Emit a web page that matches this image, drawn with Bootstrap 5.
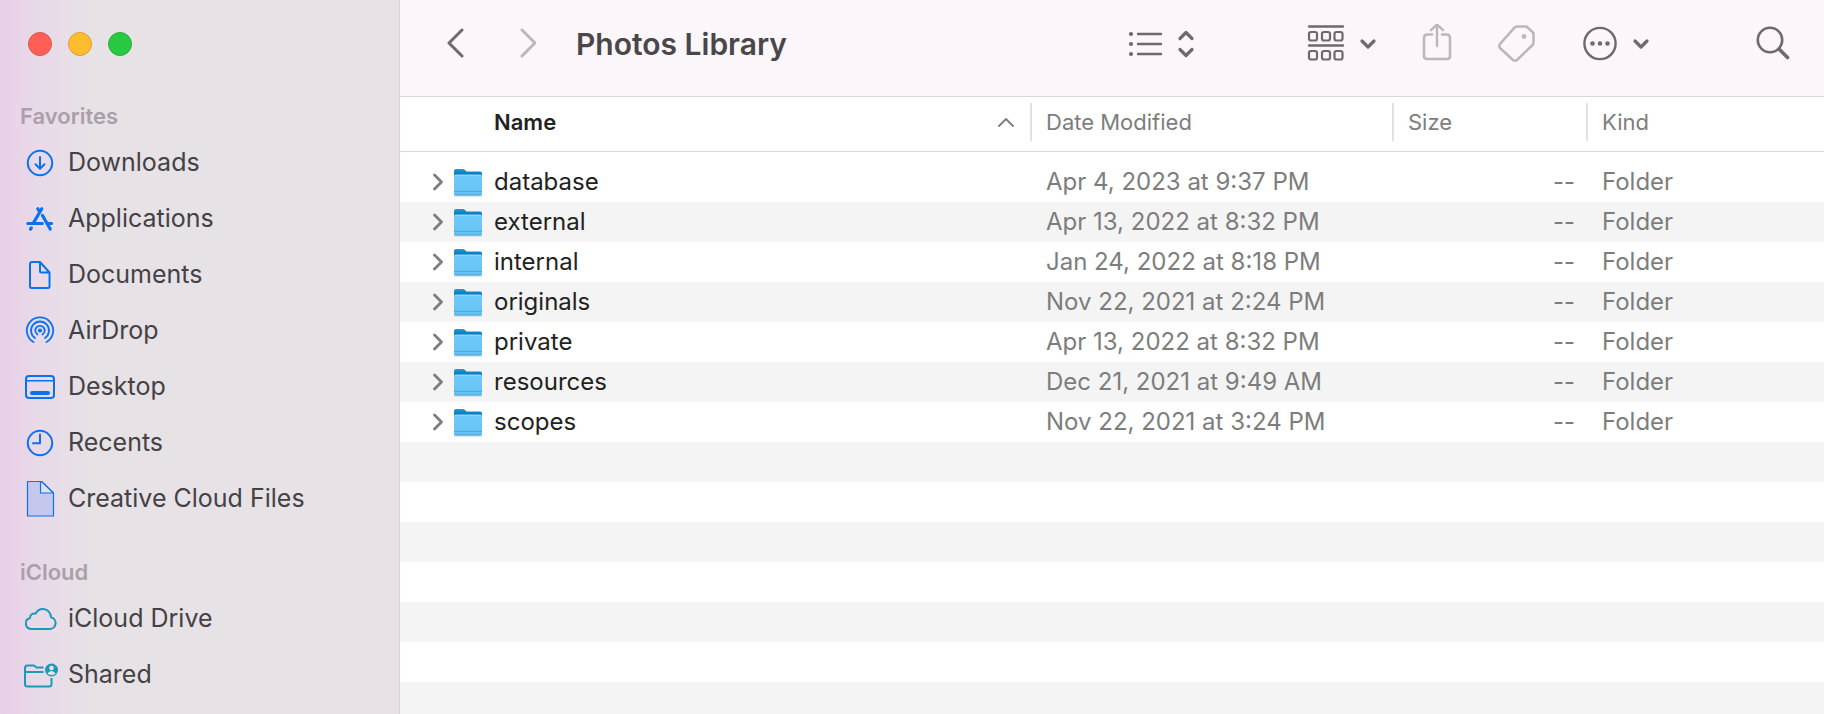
<!DOCTYPE html>
<html lang="en">
<head>
<meta charset="utf-8">
<meta name="viewport" content="width=device-width, initial-scale=1">
<title>Photos Library</title>
<link href="https://cdn.jsdelivr.net/npm/bootstrap@5.3.0/dist/css/bootstrap.min.css" rel="stylesheet">
<style>
  body { font-family: Inter, "Liberation Sans", sans-serif; background: #fff; color: #222; }
  svg { display: block; flex: none; fill: none; stroke: currentColor; stroke-linecap: round; stroke-linejoin: round; }
  .sidebar { width: 400px; background: linear-gradient(90deg, #e9cfe8 0, #e8dae8 40px, #e6e2e6 90px); border-right: 1px solid #d5d1d5; }
  .lights { height: 97px; padding: 32px 28px 0; gap: 16px; }
  .light { width: 24px; height: 24px; border: 1px solid; border-radius: 50%; padding: 0; }
  .light-close { background: #ff5f57; border-color: #e2514a; }
  .light-min { background: #febc2e; border-color: #e0a12a; }
  .light-max { background: #28c840; border-color: #24b33a; }
  .side-title { height: 38px; line-height: 38px; font-size: 22px; font-weight: 600; color: #ab9fab; padding-left: 20px; }
  .side-link { height: 56px; gap: 8px; padding-left: 20px; font-size: 25px; color: #454145; text-decoration: none; }
  .side-link svg { color: #0a72f0; }
  .side-cloud svg { color: #1a9ab8; }
  .side-group + .side-group { margin-top: 26px; }
  .toolbar { height: 97px; padding: 0 34px 8px 44px; background: #faf6fa; border-bottom: 1px solid #dbd8db; color: #6e696e; }
  .tool { border: 0; background: none; padding: 0; color: inherit; display: flex; align-items: center; gap: 14px; }
  .tool:disabled { color: #bcb7bc; }
  .window-title { font-size: 30px; line-height: 36px; font-weight: 600; color: #4a464a; margin: 0 auto 0 40px; }
  .tool-list { margin-right: 112px; }
  .tool-share, .tool-tag, .tool-more { margin-left: 45px; }
  .tool-search { margin-left: 104px; }
  .files { table-layout: fixed; width: 100%; font-size: 24px; line-height: 40px; color: #7d7d7d; }
  .files th { height: 54px; padding: 6px 0 10px; font-size: 22px; font-weight: 400; line-height: 38px; }
  .files thead { border-bottom: 1px solid #dbdbdb; }
  .files tbody::before { content: ""; display: block; height: 10px; }
  .files tbody tr:nth-child(even) { background: #f4f4f4; }
  .files td { height: 40px; padding: 0 0 0 16px; white-space: nowrap; }
  .files td.cell-size { padding-right: 11px; text-align: right; }
  .head-cell { border-left: 2px solid #e2e2e2; padding-left: 14px; height: 38px; }
  .name-head { padding: 0 16px 0 94px; color: #222; font-weight: 600; }
  .name-head svg { color: #7d7d7d; }
  .name-cell { height: 40px; padding-left: 16px; gap: 10px; color: #222; }
  .twist { border: 0; background: none; padding: 0; color: #7d7d7d; }
  .col-date { width: 362px; } .col-size { width: 194px; } .col-kind { width: 238px; }
  .stripes { background: repeating-linear-gradient(#f4f4f4 0 40px, #fff 40px 80px); }
</style>
</head>
<body>
<svg width="0" height="0" class="position-absolute" aria-hidden="true">
  <defs>
    <linearGradient id="back" x1="0" y1="0" x2="0" y2="1"><stop offset="0" stop-color="#2b96cf"/><stop offset=".3" stop-color="#0b7fc2"/></linearGradient>
    <linearGradient id="front" x1="0" y1="0" x2="0" y2="1"><stop offset="0" stop-color="#6fcbfb"/><stop offset="1" stop-color="#64c2f3"/></linearGradient>
    <symbol id="folder" viewBox="1 0 30 32">
      <path d="M1 28.500h28v.8q0 1.200-1.500 1.200h-25q-1.500 0-1.500-1.200z" fill="#9fb4c0" opacity=".6" stroke="none"/>
      <path d="M1 5q0-2 2-2h6.500q1.500 0 2.500 1l1.500 1.500h13.500q2 0 2 2v10H1z" fill="url(#back)" stroke="none"/>
      <path d="M1 10.500q0-1.800 1.800-1.800h24.400q1.800 0 1.800 1.800v17.200q0 1.800-1.800 1.800H2.800Q1 29.500 1 27.700z" fill="url(#front)" stroke="none"/>
      <path d="M2 9.200h26" stroke="#9adcfd" stroke-width="1"/>
      <path d="M1.500 25.500h27M2 28.800h26" stroke="#4fa9dc" stroke-width="1"/>
    </symbol>
    <symbol id="twist" viewBox="0 0 12 18"><path d="M2.500 2l7 7-7 7" stroke-width="2.800"/></symbol>
    <symbol id="down" viewBox="0 0 18 12"><path d="M3 3l6 6 6-6" stroke-width="3.200"/></symbol>
  </defs>
</svg>
<div class="d-flex min-vh-100">
  <aside class="sidebar flex-shrink-0">
    <div class="lights d-flex">
      <button class="light light-close" aria-label="Close"></button>
      <button class="light light-min" aria-label="Minimize"></button>
      <button class="light light-max" aria-label="Zoom"></button>
    </div>
    <nav class="side-group">
      <h2 class="side-title m-0">Favorites</h2>
      <a class="side-link d-flex align-items-center" href="#"><svg width="40" height="40" stroke-width="2"><circle cx="20" cy="20" r="12.200"/><path d="M20 14v11.500M15.500 21.200l4.500 4.500 4.500-4.500"/></svg>Downloads</a>
      <a class="side-link d-flex align-items-center" href="#"><svg width="40" height="40" stroke-width="3.200"><path d="M17.800 9.800l1.800 3M21.800 9.800L13.500 23.800M7.800 24.500h14.500M11.300 29l-.8 1.200M22.500 16.500L30.200 30M28.500 24.500h3"/></svg>Applications</a>
      <a class="side-link d-flex align-items-center" href="#"><svg width="40" height="40" stroke-width="2"><path d="M12.200 7H20l9.500 10.500v14q0 1.500-1.700 1.500H11.700q-1.700 0-1.700-1.500V9q0-2 2.200-2zM20 7v9q0 1.500 1.500 1.500h8"/></svg>Documents</a>
      <a class="side-link d-flex align-items-center" href="#"><svg width="40" height="40" stroke-width="1.800"><circle cx="20" cy="19.500" r="1.200" fill="currentColor"/><path d="M17.500 23.500a4.700 4.700 0 1 1 5 0M15 27a9 9 0 1 1 10 0M13.500 31a13.200 13.200 0 1 1 13 0" /></svg>AirDrop</a>
      <a class="side-link d-flex align-items-center" href="#"><svg width="40" height="40" stroke-width="2"><rect x="6" y="9" width="28" height="22" rx="3"/><path d="M6 13.800h28" stroke-width="1.600"/><path d="M12 26h16" stroke-width="4"/></svg>Desktop</a>
      <a class="side-link d-flex align-items-center" href="#"><svg width="40" height="40" stroke-width="2"><circle cx="20" cy="20" r="12.200"/><path d="M20 11.500v8.800h-7"/></svg>Recents</a>
      <a class="side-link d-flex align-items-center" href="#"><svg width="40" height="40" stroke-width="1.200" stroke-linejoin="miter"><path d="M7.500 2.500h14l12 11.500v23h-26z" fill="#c5c8ec"/><path d="M20.500 2.500V14h13L21.500 2.500z" fill="#e2dfee"/></svg>Creative Cloud Files</a>
    </nav>
    <nav class="side-group side-cloud">
      <h2 class="side-title m-0">iCloud</h2>
      <a class="side-link d-flex align-items-center" href="#"><svg width="40" height="40" stroke-width="2"><path d="M11 30h18a6 6 0 0 0 2-11.800C30.800 13.500 27.300 10 23 10c-3.500 0-6 1.800-7.300 4.500-3.200-.6-5.700 1.200-5.700 4.500A5.600 5.600 0 0 0 11 30z"/></svg>iCloud Drive</a>
      <a class="side-link d-flex align-items-center" href="#"><svg width="40" height="40" stroke-width="2"><path d="M23.500 12.500h-7L14 10.500H7.500Q5 10.500 5 13v16q0 2.500 2.500 2.500H29q2.500 0 2.500-2.500v-6M5 17h18.500" stroke-linecap="butt"/><circle cx="31.500" cy="15" r="6.500" fill="currentColor" stroke="none"/><circle cx="31.500" cy="13" r="2.300" fill="#e6e2e6" stroke="none"/><path d="M27.500 18.500q1.200-2.500 4-2.500t4 2.500q-1.500 1.500-4 1.500t-4-1.500z" fill="#e6e2e6" stroke="none"/></svg>Shared</a>
    </nav>
  </aside>
  <main class="flex-grow-1 d-flex flex-column">
    <header class="toolbar d-flex align-items-center">
      <button class="tool" aria-label="Back"><svg width="22" height="32" stroke-width="3"><path d="M18 2L5 15l13 13"/></svg></button>
      <button class="tool ms-5" aria-label="Forward" disabled><svg width="22" height="32" stroke-width="3"><path d="M8 2l13 13L8 28"/></svg></button>
      <h1 class="window-title">Photos Library</h1>
      <div class="d-flex align-items-center">
        <button class="tool tool-list" aria-label="View as list"><svg width="36" height="40" stroke-width="2.400"><path d="M11 10h23M11 20h23M11 30h23"/><path d="M4 10h.01M4 20h.01M4 30h.01" stroke-width="4.200"/></svg><svg width="18" height="40" stroke-width="3.200"><path d="M3 14.500l6-6 6 6M3 25.500l6 6 6-6"/></svg></button>
        <button class="tool" aria-label="Group items"><svg width="38" height="40" stroke-width="2.200"><path d="M2 2.500h34M2 21.500h34" stroke-width="2.400"/><rect x="2" y="8" width="8" height="8.500" rx="2"/><rect x="15" y="8" width="8" height="8.500" rx="2"/><rect x="27.500" y="8" width="8" height="8.500" rx="2"/><rect x="2" y="27" width="8" height="8.500" rx="2"/><rect x="15" y="27" width="8" height="8.500" rx="2"/><rect x="27.500" y="27" width="8" height="8.500" rx="2"/></svg><svg width="18" height="12"><use href="#down"/></svg></button>
        <button class="tool tool-share" aria-label="Share" disabled><svg width="30" height="40" stroke-width="2.600"><path d="M10 10.500H5.500Q2 10.500 2 14v18q0 3 3 3h20q3 0 3-3V14q0-3.500-3.500-3.500H20"/><path d="M15 22V1M9 6.200L15 .500l6 5.700" stroke-width="2.400"/></svg></button>
        <button class="tool tool-tag" aria-label="Tags" disabled><svg width="40" height="40" stroke-width="2.600"><path d="M20 2.500h9.500l7 6.500v9.500q0 1.500-1 2.500L20 36q-2 1.500-4 0L3 24q-1.500-2 0-4L17.500 3.700q1-1.200 2.500-1.200z"/><circle cx="27" cy="12.500" r="2.400" fill="currentColor" stroke="none"/></svg></button>
        <button class="tool tool-more" aria-label="More actions"><svg width="36" height="40" stroke-width="2.400"><circle cx="18" cy="19.500" r="15.600"/><path d="M10.500 19.500h.01M18 19.500h.01M25.500 19.500h.01" stroke-width="4.600"/></svg><svg width="18" height="12"><use href="#down"/></svg></button>
        <button class="tool tool-search" aria-label="Search"><svg width="36" height="40" stroke-width="2.600"><circle cx="16" cy="16" r="12.200"/><path d="M25 25l8.500 8.500" stroke-width="3.600"/></svg></button>
      </div>
    </header>
    <table class="files">
      <colgroup><col><col class="col-date"><col class="col-size"><col class="col-kind"></colgroup>
      <thead><tr>
        <th scope="col"><div class="name-head d-flex align-items-center justify-content-between">Name<svg width="16" height="10" stroke-width="1.800"><path d="M1 9l7-7 7 7"/></svg></div></th>
        <th scope="col"><div class="head-cell">Date Modified</div></th>
        <th scope="col"><div class="head-cell">Size</div></th>
        <th scope="col"><div class="head-cell">Kind</div></th>
      </tr></thead>
      <tbody>
        <tr><td><div class="name-cell d-flex align-items-center"><button class="twist" aria-label="Expand database"><svg width="12" height="18"><use href="#twist"/></svg></button><svg width="30" height="32"><use href="#folder"/></svg>database</div></td><td>Apr 4, 2023 at 9:37 PM</td><td class="cell-size">--</td><td>Folder</td></tr>
        <tr><td><div class="name-cell d-flex align-items-center"><button class="twist" aria-label="Expand external"><svg width="12" height="18"><use href="#twist"/></svg></button><svg width="30" height="32"><use href="#folder"/></svg>external</div></td><td>Apr 13, 2022 at 8:32 PM</td><td class="cell-size">--</td><td>Folder</td></tr>
        <tr><td><div class="name-cell d-flex align-items-center"><button class="twist" aria-label="Expand internal"><svg width="12" height="18"><use href="#twist"/></svg></button><svg width="30" height="32"><use href="#folder"/></svg>internal</div></td><td>Jan 24, 2022 at 8:18 PM</td><td class="cell-size">--</td><td>Folder</td></tr>
        <tr><td><div class="name-cell d-flex align-items-center"><button class="twist" aria-label="Expand originals"><svg width="12" height="18"><use href="#twist"/></svg></button><svg width="30" height="32"><use href="#folder"/></svg>originals</div></td><td>Nov 22, 2021 at 2:24 PM</td><td class="cell-size">--</td><td>Folder</td></tr>
        <tr><td><div class="name-cell d-flex align-items-center"><button class="twist" aria-label="Expand private"><svg width="12" height="18"><use href="#twist"/></svg></button><svg width="30" height="32"><use href="#folder"/></svg>private</div></td><td>Apr 13, 2022 at 8:32 PM</td><td class="cell-size">--</td><td>Folder</td></tr>
        <tr><td><div class="name-cell d-flex align-items-center"><button class="twist" aria-label="Expand resources"><svg width="12" height="18"><use href="#twist"/></svg></button><svg width="30" height="32"><use href="#folder"/></svg>resources</div></td><td>Dec 21, 2021 at 9:49 AM</td><td class="cell-size">--</td><td>Folder</td></tr>
        <tr><td><div class="name-cell d-flex align-items-center"><button class="twist" aria-label="Expand scopes"><svg width="12" height="18"><use href="#twist"/></svg></button><svg width="30" height="32"><use href="#folder"/></svg>scopes</div></td><td>Nov 22, 2021 at 3:24 PM</td><td class="cell-size">--</td><td>Folder</td></tr>
      </tbody>
    </table>
    <div class="stripes flex-grow-1"></div>
  </main>
</div>
<script src="https://cdn.jsdelivr.net/npm/bootstrap@5.3.0/dist/js/bootstrap.bundle.min.js"></script>
</body>
</html>
